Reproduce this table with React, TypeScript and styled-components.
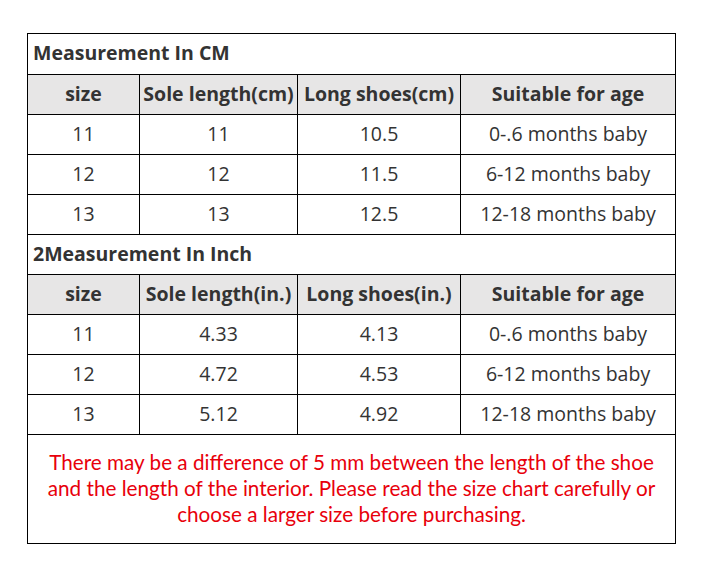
import * as React from 'react'
import styled, { createGlobalStyle } from 'styled-components'

const GlobalStyle = createGlobalStyle`
  html, body {
    margin: 0;
    padding: 0;
    background: #fff;
  }
`

const Page = styled.div`
  padding: 33px 0 0 27px;
  font-family: 'Open Sans', 'Noto Sans', sans-serif;
  color: #333;
`

const Chart = styled.table`
  width: 648px;
  border-collapse: collapse;
  table-layout: fixed;
  border: 1px solid #000;
`

const Cell = styled.td`
  border: 1px solid #000;
  height: 37px;
  padding: 0 0 2px;
  text-align: center;
  font-size: 19.5px;
  line-height: 22px;
  white-space: nowrap;
`

const HeadCell = styled(Cell)`
  background: #e7e6e6;
  font-weight: 700;
`

const TitleCell = styled(Cell)<{ $tall?: boolean }>`
  height: ${p => (p.$tall ? 38 : 37)}px;
  text-align: left;
  padding-left: 5px;
  font-weight: 700;
`

const NoteCell = styled(Cell)`
  height: 106px;
  color: #e8000b;
  font-family: Lato, 'Noto Sans', sans-serif;
  font-size: 20.7px;
  line-height: 26px;
`

interface Section {
  title: string
  unit: string
  rows: [string, string, string, string][]
}

const sections: Section[] = [
  {
    title: 'Measurement In CM',
    unit: 'cm',
    rows: [
      ['11', '11', '10.5', '0-.6 months baby'],
      ['12', '12', '11.5', '6-12 months baby'],
      ['13', '13', '12.5', '12-18 months baby']
    ]
  },
  {
    title: '2Measurement In Inch',
    unit: 'in.',
    rows: [
      ['11', '4.33', '4.13', '0-.6 months baby'],
      ['12', '4.72', '4.53', '6-12 months baby'],
      ['13', '5.12', '4.92', '12-18 months baby']
    ]
  }
]

const App: React.FC = () => {
  return (
    <>
      <GlobalStyle />
      <Page>
        <Chart>
          <colgroup>
            <col style={{ width: 112 }} />
            <col style={{ width: 158 }} />
            <col style={{ width: 163 }} />
            <col style={{ width: 215 }} />
          </colgroup>
          <tbody>
            {sections.map((section, i) => (
              <React.Fragment key={section.title}>
                <tr>
                  <TitleCell colSpan={4} $tall={i === 0}>{section.title}</TitleCell>
                </tr>
                <tr>
                  <HeadCell>size</HeadCell>
                  <HeadCell>Sole length({section.unit})</HeadCell>
                  <HeadCell>Long shoes({section.unit})</HeadCell>
                  <HeadCell>Suitable for age</HeadCell>
                </tr>
                {section.rows.map(row => (
                  <tr key={row[0]}>
                    {row.map((value, j) => (
                      <Cell key={j}>{value}</Cell>
                    ))}
                  </tr>
                ))}
              </React.Fragment>
            ))}
            <tr>
              <NoteCell colSpan={4}>
                There may be a difference of 5 mm between the length of the shoe
                <br />
                and the length of the interior. Please read the size chart carefully or
                <br />
                choose a larger size before purchasing.
              </NoteCell>
            </tr>
          </tbody>
        </Chart>
      </Page>
    </>
  )
}

export default App
